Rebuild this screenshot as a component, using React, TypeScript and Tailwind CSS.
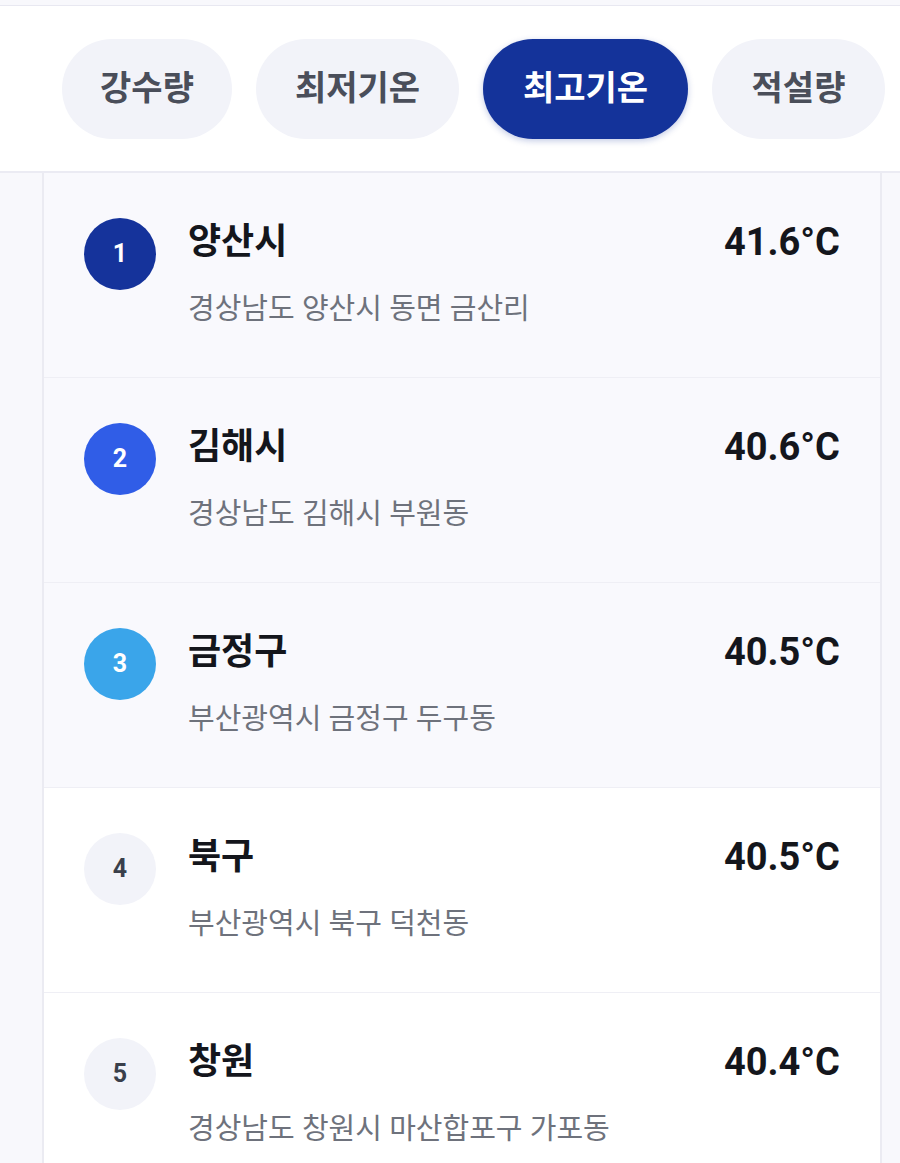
const tabs = [
  { label: '강수량', width: 'w-[170px]', active: false },
  { label: '최저기온', width: 'w-[203px]', active: false },
  { label: '최고기온', width: 'w-[205px]', active: true },
  { label: '적설량', width: 'w-[173px]', active: false },
];

const rankings = [
  { rank: 1, name: '양산시', address: '경상남도 양산시 동면 금산리', value: '41.6°C', badge: 'bg-[#15339b] text-white', row: 'bg-[#f9f9fd]' },
  { rank: 2, name: '김해시', address: '경상남도 김해시 부원동', value: '40.6°C', badge: 'bg-[#305de7] text-white', row: 'bg-[#f9f9fd]' },
  { rank: 3, name: '금정구', address: '부산광역시 금정구 두구동', value: '40.5°C', badge: 'bg-[#3aa5ea] text-white', row: 'bg-[#f9f9fd]' },
  { rank: 4, name: '북구', address: '부산광역시 북구 덕천동', value: '40.5°C', badge: 'bg-[#f2f3f9] text-[#3a3f4b]', row: 'bg-white' },
  { rank: 5, name: '창원', address: '경상남도 창원시 마산합포구 가포동', value: '40.4°C', badge: 'bg-[#f2f3f9] text-[#3a3f4b]', row: 'bg-white' },
];

export default function App() {
  return (
    <div className="h-[1163px] w-[900px] overflow-hidden bg-[#f8f8fc] font-['Roboto','Noto_Sans_CJK_KR',sans-serif]">
      {/* Top strip */}
      <div className="h-[6px] border-b border-[#e8e8f1] bg-[#f8f8fc]" />
      {/* Tabs */}
      <div className="flex h-[167px] items-center gap-6 overflow-hidden border-b-2 border-[#ebebf3] bg-white pl-[62px]">
        {tabs.map((tab) => (
          <div
            key={tab.label}
            className={`flex h-[100px] shrink-0 items-center justify-center rounded-full text-[34px] font-bold ${tab.width} ${
              tab.active
                ? 'bg-[#14339a] text-white shadow-[0_2px_6px_rgba(20,51,154,0.25)]'
                : 'bg-[#f2f3f9] text-[#4a4e5a]'
            }`}
          >
            {tab.label}
          </div>
        ))}
      </div>
      {/* Ranking list */}
      <div className="ml-[42px] mr-[18px] border-x-2 border-[#ebebf2]">
        {rankings.map((item) => (
          <div
            key={item.rank}
            className={`flex h-[205px] items-start border-b border-[#efeff5] pl-[40px] pr-[40px] pt-[45px] ${item.row}`}
          >
            <div
              className={`flex h-[72px] w-[72px] shrink-0 items-center justify-center rounded-full text-[25px] font-bold ${item.badge}`}
            >
              {item.rank}
            </div>
            <div className="ml-[32px] mt-[2px] flex-1">
              <div className="text-[36px] font-bold leading-[44px] text-[#14161c]">
                {item.name}
              </div>
              <div className="mt-[27px] text-[29px] leading-[36px] text-[#6e727c]">
                {item.address}
              </div>
            </div>
            <div className="mt-[2px] text-[38px] font-bold leading-[44px] text-[#14161c]">
              {item.value}
            </div>
          </div>
        ))}
      </div>
    </div>
  );
}
